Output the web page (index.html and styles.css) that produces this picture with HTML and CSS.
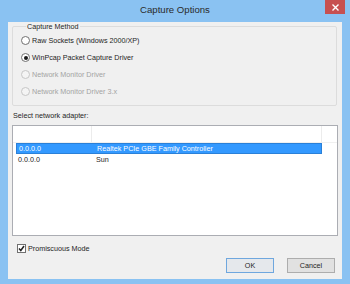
FILE: index.html
```html
<!DOCTYPE html>
<html lang="en">
<head>
  <meta charset="UTF-8" />
  <title>Capture Options</title>
  <link rel="stylesheet" href="styles.css">
</head>
<body>
  <div class="window">
    <div class="titlebar">
      <span class="title">Capture Options</span>
      <button class="close" title="Close">
        <svg width="7" height="7" viewBox="0 0 7 7"><path d="M0.5 0.5L6.5 6.5M6.5 0.5L0.5 6.5" stroke="#fff" stroke-width="1.4"/></svg>
      </button>
    </div>
    <div class="client">
      <fieldset class="group">
        <legend>Capture Method</legend>
        <label class="radio-row"><span class="radio"></span>Raw Sockets (Windows 2000/XP)</label>
        <label class="radio-row"><span class="radio checked"></span>WinPcap Packet Capture Driver</label>
        <label class="radio-row disabled"><span class="radio"></span>Network Monitor Driver</label>
        <label class="radio-row disabled"><span class="radio"></span>Network Monitor Driver 3.x</label>
      </fieldset>

      <div class="adapter-label">Select network adapter:</div>
      <div class="listview">
        <div class="lv-header">
          <div class="lv-col first"></div>
          <div class="lv-col second"></div>
          <div class="lv-col rest"></div>
        </div>
        <div class="lv-row selected">
          <span class="cell first">0.0.0.0</span>
          <span class="cell">Realtek PCIe GBE Family Controller</span>
        </div>
        <div class="lv-row">
          <span class="cell first">0.0.0.0</span>
          <span class="cell">Sun</span>
        </div>
      </div>

      <label class="check-row"><span class="checkbox">
        <svg width="7" height="7" viewBox="0 0 7 7"><path d="M1 3.5L2.8 5.5L6 1" fill="none" stroke="#222" stroke-width="1.5"/></svg>
      </span>Promiscuous Mode</label>

      <div class="buttons">
        <button class="btn default">OK</button>
        <button class="btn">Cancel</button>
      </div>
    </div>
  </div>
</body>
</html>
```

FILE: styles.css
```css
* { box-sizing: border-box; }
body {
  margin: 0;
  font-family: "Liberation Sans", Arial, sans-serif;
  background: #8ac2f2;
}
.window {
  width: 350px;
  height: 284px;
  background: #8ac2f2;
  display: flex;
  flex-direction: column;
  padding: 0 8px 5px 8px;
}
.titlebar {
  height: 22px;
  display: flex;
  justify-content: center;
  position: relative;
}
.title {
  font-size: 9.6px;
  line-height: 20px;
  color: #2b2b2b;
}
.close {
  position: absolute;
  right: -3px;
  top: 0;
  width: 20px;
  height: 14px;
  border: none;
  padding: 0;
  background: #c75050;
  display: flex;
  align-items: center;
  justify-content: center;
}
.client {
  flex: 1;
  background: #f0f0f0;
  display: flex;
  flex-direction: column;
  font-size: 7.2px;
  color: #1e1e1e;
}
.group {
  margin: 0 5px 0 4px;
  padding: 1px 8px 4px 8px;
  border: 1px solid #dcdcdc;
  border-radius: 2px;
  height: 84px;
}
.group legend {
  padding: 0 1px;
  margin-left: 5px;
  line-height: 9px;
}
.radio-row {
  height: 17px;
  display: flex;
  align-items: center;
  gap: 2px;
}
.radio {
  width: 9px;
  height: 9px;
  border-radius: 50%;
  border: 1px solid #707070;
  background: #fff;
  display: flex;
  align-items: center;
  justify-content: center;
}
.radio.checked::after {
  content: "";
  width: 4px;
  height: 4px;
  border-radius: 50%;
  background: #1a1a1a;
}
.radio-row.disabled { color: #a3a3a3; }
.radio-row.disabled .radio {
  border-color: #c6c6c6;
  background: #f4f4f4;
}
.adapter-label {
  margin: 5px 0 0 5px;
  line-height: 9px;
}
.listview {
  margin: 5px 4px 0 4px;
  height: 111px;
  border: 1px solid #abadb3;
  background: #fff;
}
.lv-header {
  height: 17px;
  display: flex;
  border-bottom: 1px solid #f0f0f0;
}
.lv-col { border-right: 1px solid #ececec; }
.lv-col.first { width: 79px; }
.lv-col.second { width: 230px; }
.lv-col.rest { flex: 1; border-right: none; }
.lv-row {
  height: 11px;
  margin: 0 15px 0 3px;
  display: flex;
  align-items: center;
  line-height: 9px;
}
.lv-row.selected {
  background: #3399ff;
  border: 1px solid #2a80d8;
  color: #fff;
}
.cell { padding-left: 2px; }
.cell.first { width: 78px; }
.check-row {
  margin: 7px 0 0 9px;
  height: 10px;
  display: flex;
  align-items: center;
  gap: 2px;
}
.checkbox {
  width: 9px;
  height: 9px;
  border: 1px solid #707070;
  background: #fff;
  display: flex;
  align-items: center;
  justify-content: center;
}
.buttons {
  display: flex;
  justify-content: flex-end;
  gap: 13px;
  margin: 5px 7px 0 0;
}
.btn {
  width: 48px;
  height: 15px;
  padding: 0;
  font-family: "Liberation Sans", Arial, sans-serif;
  font-size: 7.2px;
  color: #1e1e1e;
  border: 1px solid #adadad;
  background: #e1e1e1;
}
.btn.default {
  border-color: #6fa7de;
  background: #e5e8ec;
}
```
